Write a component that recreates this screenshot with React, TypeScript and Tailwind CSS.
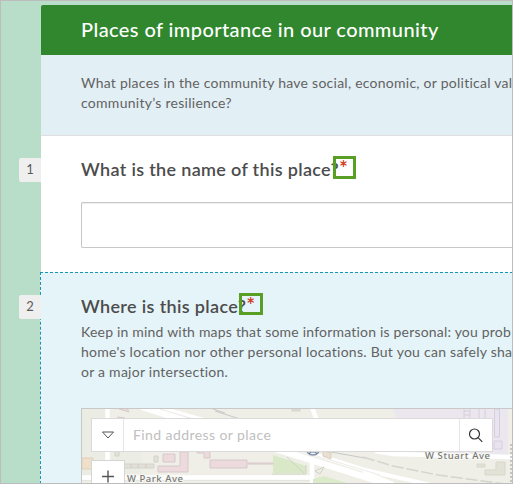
import type { ReactNode } from 'react';

function NumberTab({ children }: { children: ReactNode }) {
  return (
    <div className="absolute top-[22px] -left-[22px] flex h-6 w-[22px] items-center justify-center rounded-l-[2px] bg-[#efefef] pb-0.5 text-[13px] leading-6 text-[#5a5a5a]">
      {children}
    </div>
  );
}

function RequiredMark() {
  return <span className="text-[21px] leading-none font-semibold text-[#cf3a20]">*</span>;
}

function MapDrawing() {
  return (
    <svg className="absolute inset-0 h-[74px] w-[430px]" viewBox="82 409 430 74" fill="none">
      <path d="M82 409h430v74H82z" fill="#efefe8" />
      <path d="M393 409h115v46l-100-3z" fill="#ece7ee" />
      <path d="M82 409h23v66H82zM111 433l30 12v29h-30z" fill="#ebece3" />
      <path d="M142 407l223 70 64 20" stroke="#fff" strokeWidth="6.500" />
      <path d="M158 407l70 20 137 43 70 16" stroke="#fff" strokeWidth="4" />
      <path d="M107.500 409v74M82 477.500h228M312 463v20M312 407l5 14M375 451l18 3 119 3M363 472l30 12" stroke="#fff" strokeWidth="4.500" />
      <path d="M82 480.500h228M160 409l220 66" stroke="#e3e3dc" strokeWidth=".7" />
      <path d="M213 409l12 4M215 411l28 9M325 451l40 7" stroke="#c8c8c8" strokeWidth="1" />
      <path d="M363 457l30 9 45 9 75 10" stroke="#d4d4d0" strokeWidth="1.5" strokeDasharray="12 3" />
      <path d="M273 455l33 11v7h-33z" fill="#d9e8c6" />
      <path d="M313 483v-4l11-3 26 8z" fill="#dbeac9" />
      <path d="M287 457l17 16M272 474h34v-9M315 471l9-4-4 7z" stroke="#cfd3c6" />
      <g fill="#ecdadd" stroke="#d8c8cb">
        <path d="M119 409l10 3-2-4zM118 417l7 1-1 4-7-2zM163 454h12v8h-12zM180 452h8v20h-30v-6h22zM197 451v2h7v5h6v-7M210 460h37v8h-37zM248 463h25v1h-25z" />
      </g>
      <path d="M82 458h11v6h4v5H82z" fill="#f0dfc9" stroke="#e0d0b8" />
      <path d="M115 451h4v5h-4zM124 464h7v4h-7zM131 464h7v4h-7zM138 464h8v4h-8zM146 464h8v4h-8zM154 456h4v6h-4zM292 409h8v2h-8z" fill="#e2e1d8" stroke="#d3d2c9" />
      <path d="M323 451l8 2v6l-8-3z" fill="#eadfd0" stroke="#d9cfc0" />
      <path d="M477 464h8v3h-8zM485 470h11v-8h9v13h-20z" fill="#e3e2d6" stroke="#d8d7cb" />
      <g fill="#e8e3ee" stroke="#d5cede">
        <path d="M464 409v10M470 409v10M464 411h6M464 415h6M479 409v10M485 409v10M494.500 409h5v28h-5zM494 441h8v8h-8z" />
      </g>
      <circle cx="313" cy="448" r="7" fill="#f4f5f8" stroke="#8795ae" strokeWidth="1.500" />
      <path d="M309 454l4-5 4 5M310 452h6" stroke="#64748b" strokeWidth="1.200" />
      <path d="M511 444v39" stroke="#999" strokeDasharray="2 2" />
      <g fontFamily="'Noto Sans', sans-serif" fontSize="9.5" fontWeight="500" fill="#777" stroke="#f7f7f2" strokeWidth="2" paintOrder="stroke">
        <text x="127" y="481.500" textLength="56">W Park Ave</text>
        <text x="425" y="459" textLength="65">W Stuart Ave</text>
      </g>
    </svg>
  );
}

export default function App() {
  return (
    <main className="relative h-[484px] w-[513px] overflow-hidden bg-[#b8ddc8] pt-[5px] pl-[41px] font-[Lato,sans-serif] text-[#4c4c4c]">
      <div className="w-[472px]">
        <header className="flex h-[50px] items-center rounded-tl-[2px] bg-[#31872e] pb-0.5 pl-10">
          <h1 className="text-[20px] leading-6 font-medium tracking-[0.410px] whitespace-nowrap text-white">Places of importance in our community</h1>
        </header>

        <section className="h-[81px] border-b border-[#dfdfdf] bg-[#e2eff5] pt-[18px] pl-10 text-[14px] leading-5 whitespace-nowrap text-[#626262]">
          <p className="tracking-[0.250px]">What places in the community have social, economic, or political val</p>
          <p className="tracking-[0.280px]">community’s resilience?</p>
        </section>

        <section className="relative h-[136px] bg-white pt-[22px] pl-10">
          <NumberTab>1</NumberTab>
          <h2 className="-mt-px h-6 text-[18px] leading-6 font-semibold tracking-[0.330px] whitespace-nowrap">What is the name of this place?<RequiredMark /></h2>
          <div className="absolute top-5 left-[292px] h-[23px] w-[23px] border-[3px] border-[#5a9f25]" />
          <div className="mt-[21px] h-[46px] rounded-l-[2px] border border-r-0 border-[#c7c7c7] bg-white shadow-[inset_0_1px_1px_#eeeeee]" />
        </section>

        <section className="relative -ml-px h-[212px] border-t border-l border-dashed border-[#1995b4] bg-[#e5f4f9] pt-[22px] pl-10">
          <NumberTab>2</NumberTab>
          <h2 className="-mt-px h-6 text-[18px] leading-6 font-semibold tracking-[0.350px] whitespace-nowrap">Where is this place?<RequiredMark /></h2>
          <div className="absolute top-5 left-[198px] h-[22px] w-6 border-[3px] border-[#5a9f25]" />
          <div className="mt-1 text-[14px] leading-5 whitespace-nowrap text-[#626262]">
            <p className="tracking-[0.200px]">Keep in mind with maps that some information is personal: you prob</p>
            <p className="tracking-[0.260px]">home's location nor other personal locations. But you can safely sha</p>
            <p className="tracking-[0.250px]">or a major intersection.</p>
          </div>
          <div className="relative mt-[26px] h-[76px] overflow-hidden border-t border-l border-[#c8c8c8] pt-[10px] pl-[10px]">
            <MapDrawing />
            <div className="relative flex h-8 w-[400px] bg-white text-[14px] shadow-[0_0_0_1px_#dadada]">
              <div className="flex w-8 items-center justify-center border-r border-[#e5e5e5]">
                <svg className="h-4 w-4" viewBox="0 0 16 16" fill="none" stroke="#555"><path d="M2.500 5h11l-5.500 6z" /></svg>
              </div>
              <div className="flex flex-1 items-center pb-0.5 pl-[9px] tracking-[0.420px] text-[#c0c0c0]">Find address or place</div>
              <div className="flex w-[33px] items-center justify-center border-l border-[#e5e5e5]">
                <svg className="h-4 w-4" viewBox="0 0 16 16" fill="none" stroke="#333" strokeWidth="1.200"><circle cx="6.500" cy="7" r="5" /><path d="M10.100 10.600l4.200 4.200" /></svg>
              </div>
            </div>
            <div className="relative mt-[10px] flex h-8 w-8 justify-center bg-white pt-2 shadow-[0_0_0_1px_#d5d5d5]">
              <svg className="h-4 w-4" viewBox="0 0 16 16" stroke="#555" strokeWidth="1.400"><path d="M2 7.500h12M8 1.500v12" /></svg>
            </div>
          </div>
        </section>
      </div>
      <div className="pointer-events-none absolute inset-0 border border-[#bdbdbd]" />
    </main>
  );
}
